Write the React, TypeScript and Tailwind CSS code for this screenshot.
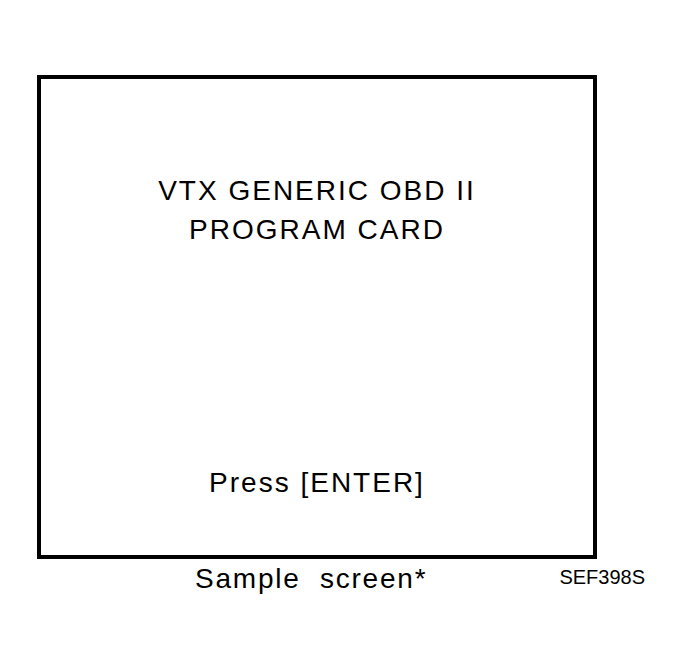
export default function App() {
  return (
    <div className="min-h-[668px] w-[684px] bg-white text-black" style={{ fontFamily: '"Liberation Sans", Arial, sans-serif' }}>
      <div className="pl-[37px] pt-[75px]">
        <div className="flex h-[484px] w-[560px] flex-col items-center border-4 border-black">
          <div className="pt-[92px] text-center text-[28px] leading-[39px] tracking-[2px]">
            <p>VTX GENERIC OBD II</p>
            <p>PROGRAM CARD</p>
          </div>
          <p className="mt-[214px] text-[28px] leading-[39px] tracking-[2px]">Press [ENTER]</p>
        </div>
        <div className="flex w-[608px] items-start">
          <p className="ml-[158px] mt-[5px] whitespace-pre text-[28px] leading-[30px] tracking-[1.8px]">Sample  screen*</p>
          <p className="ml-auto mt-[6px] text-[20px] leading-[24px]">SEF398S</p>
        </div>
      </div>
    </div>
  );
}
